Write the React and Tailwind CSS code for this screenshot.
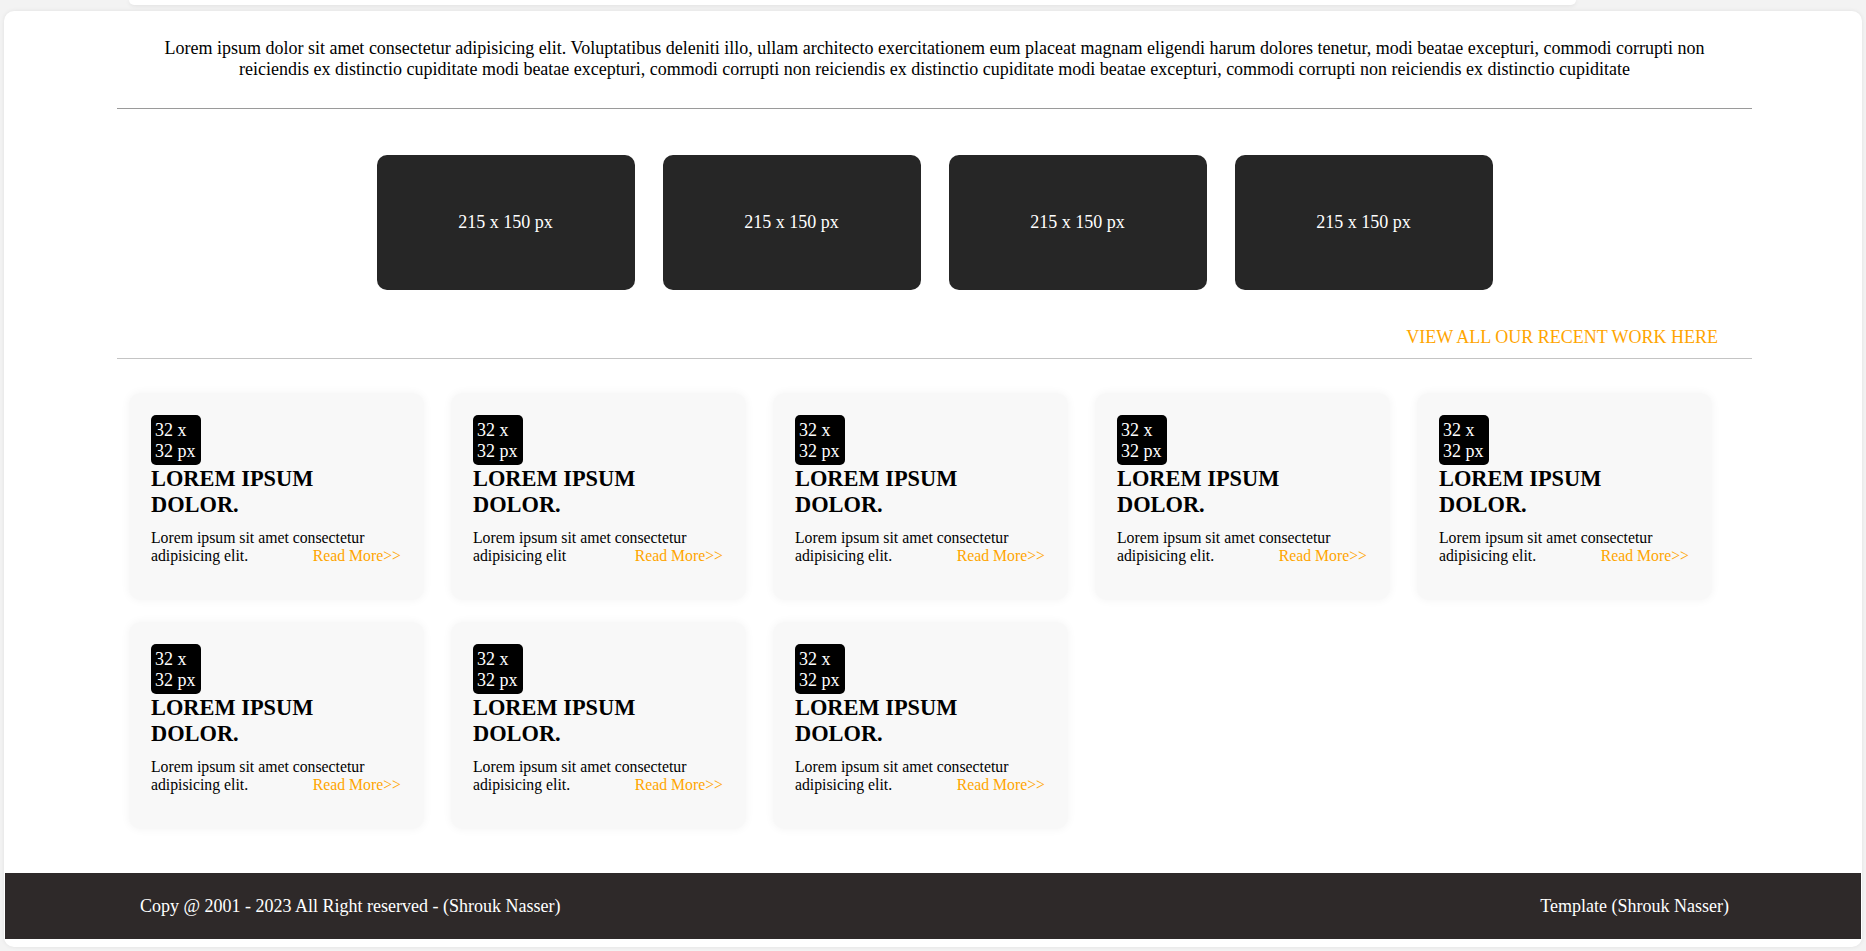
import React from "react";

const serif = { fontFamily: '"Liberation Serif", "Times New Roman", serif' };

function Shot() {
  return (
    <div className="w-[258px] h-[135px] rounded-[10px] bg-[#262626] flex items-center justify-center text-white text-[18px]">
      215 x 150 px
    </div>
  );
}

function Card({ end }) {
  return (
    <div className="w-[295px] h-[207px] rounded-[12px] bg-[#f8f8f8] shadow-[0_0_10px_rgba(0,0,0,0.05)] pt-[22px] pl-[22px] pr-[23px]">
      <div className="w-[50px] h-[50px] rounded-[5px] bg-black text-white text-[18px] leading-[21px] px-[4px] pt-[5px]">
        32 x 32 px
      </div>
      <h3 className="mt-[1px] text-[22.4px] font-bold leading-[26px] text-black">
        LOREM IPSUM
        <br />
        DOLOR.
      </h3>
      <div className="mt-[11px] text-[15.75px] leading-[18px] text-black">
        <div>Lorem ipsum sit amet consectetur</div>
        <div className="flex justify-between">
          <span>{end}</span>
          <a className="text-[#ffa500] cursor-pointer">Read More&gt;&gt;</a>
        </div>
      </div>
    </div>
  );
}

export default function App() {
  const ends = [
    "adipisicing elit.",
    "adipisicing elit",
    "adipisicing elit.",
    "adipisicing elit.",
    "adipisicing elit.",
    "adipisicing elit.",
    "adipisicing elit.",
    "adipisicing elit.",
  ];
  return (
    <div className="w-[1866px] h-[951px] bg-[#f3f3f3] overflow-hidden" style={serif}>
      <div className="ml-[129px] w-[1447px] h-[5px] bg-white rounded-b-[12px] shadow-[0_1px_4px_rgba(0,0,0,0.08)]" />
      <div className="mx-[4px] mt-[6px] h-[936px] bg-white rounded-[10px] shadow-[0_0_4px_rgba(0,0,0,0.08)] flex flex-col">
        <div className="pl-[113px] pr-[110px] pt-[27px]">
          <p className="text-center text-[18px] leading-[20.7px] text-black">
            Lorem ipsum dolor sit amet consectetur adipisicing elit. Voluptatibus deleniti illo, ullam architecto exercitationem eum placeat magnam eligendi harum dolores tenetur, modi beatae excepturi, commodi corrupti non
            <br />
            reiciendis ex distinctio cupiditate modi beatae excepturi, commodi corrupti non reiciendis ex distinctio cupiditate modi beatae excepturi, commodi corrupti non reiciendis ex distinctio cupiditate
          </p>
          <div className="mt-[29px] border-t border-[#9a9a9a]" />
          <div className="mt-[46px] flex justify-center gap-[28px]">
            <Shot />
            <Shot />
            <Shot />
            <Shot />
          </div>
          <div className="mt-[37px] flex justify-end pr-[34px]">
            <a className="text-[18px] leading-[20.7px] text-[#ffa500] cursor-pointer">
              VIEW ALL OUR RECENT WORK HERE
            </a>
          </div>
          <div className="mt-[10px] border-t border-[#c4c4c4]" />
          <div className="mt-[34px] pl-[12px] flex flex-wrap gap-x-[27px] gap-y-[22px]">
            {ends.map((e, i) => (
              <Card key={i} end={e} />
            ))}
          </div>
        </div>
        <div className="mt-auto mb-[8px] mx-[1px] h-[66px] bg-[#2e2929] text-white text-[18px] flex items-center justify-between pl-[135px] pr-[132px]">
          <span>Copy @ 2001 - 2023 All Right reserved - (Shrouk Nasser)</span>
          <span>Template (Shrouk Nasser)</span>
        </div>
      </div>
    </div>
  );
}
